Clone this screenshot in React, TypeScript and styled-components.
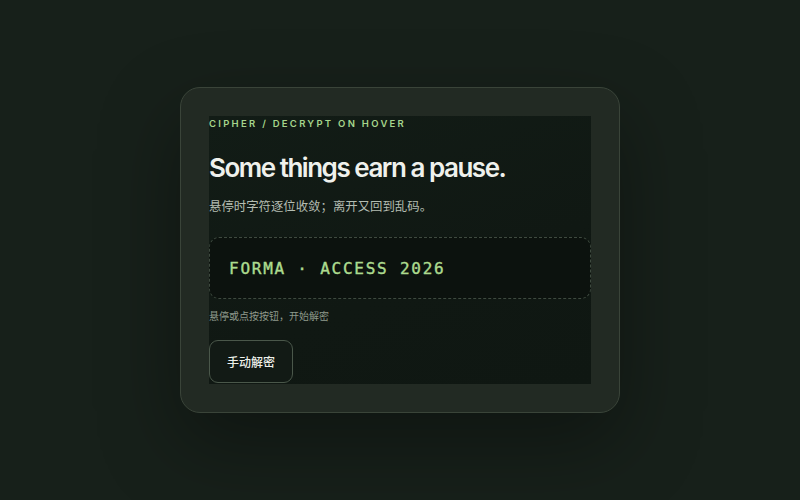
import React from "react";
import styled, { createGlobalStyle } from "styled-components";

const GlobalStyle = createGlobalStyle`
  html, body {
    margin: 0;
    padding: 0;
    background: #17201a;
  }
  #root {
    min-height: 100vh;
  }
`;

const Page = styled.main`
  height: 500px;
  display: flex;
  align-items: center;
  justify-content: center;
  background: #17201a;
  font-family: Inter, "Noto Sans CJK SC", sans-serif;
`;

const Card = styled.section`
  width: 382px;
  padding: 28px;
  border: 1px solid #3a4439;
  border-radius: 20px;
  background: #222a23;
  box-shadow: 0 30px 80px rgba(0, 0, 0, 0.35);
`;

const Stage = styled.div`
  display: flex;
  flex-direction: column;
  align-items: flex-start;
  padding-bottom: 1px;
  background: linear-gradient(160deg, #121c16 0%, #101813 60%, #0f1712 100%);
`;

const Eyebrow = styled.p`
  margin: 2px 0 0;
  font-size: 9.5px;
  line-height: 12px;
  font-weight: 600;
  letter-spacing: 0.24em;
  color: #a6d68c;
`;

const Title = styled.h1`
  margin: 22px 0 0;
  font-size: 26px;
  line-height: 32px;
  font-weight: 600;
  letter-spacing: -0.057em;
  color: #eff1ec;
`;

const Lead = styled.p`
  margin: 14px 0 0;
  font-size: 12.4px;
  line-height: 18px;
  color: #b4bdb2;
`;

const CodeBox = styled.div`
  box-sizing: border-box;
  align-self: stretch;
  margin-top: 21px;
  height: 62px;
  display: flex;
  align-items: center;
  padding: 0 19px;
  border: 1px dashed #3e4a3f;
  border-radius: 10px;
  background: #0c120e;
  font-family: "DejaVu Sans Mono", "Liberation Mono", monospace;
  font-size: 16px;
  letter-spacing: 0.11em;
  color: #acdb8e;
  -webkit-text-stroke: 0.4px #acdb8e;
`;

const Hint = styled.p`
  margin: 10px 0 0;
  font-size: 10px;
  line-height: 14px;
  color: #8e9a8c;
`;

const Button = styled.button`
  margin-top: 17px;
  height: 43px;
  width: 84px;
  padding: 0;
  border: 1px solid #4a574a;
  border-radius: 9px;
  background: #121a15;
  color: #eef0ea;
  font-family: Inter, "Noto Sans CJK SC", sans-serif;
  font-size: 12px;
  font-weight: 500;
  cursor: pointer;
`;

export default function App() {
  return (
    <>
      <GlobalStyle />
      <Page>
        <Card>
          <Stage>
            <Eyebrow>CIPHER / DECRYPT ON HOVER</Eyebrow>
            <Title>Some things earn a pause.</Title>
            <Lead>悬停时字符逐位收敛；离开又回到乱码。</Lead>
            <CodeBox>FORMA · ACCESS 2026</CodeBox>
            <Hint>悬停或点按按钮，开始解密</Hint>
            <Button>手动解密</Button>
          </Stage>
        </Card>
      </Page>
    </>
  );
}
